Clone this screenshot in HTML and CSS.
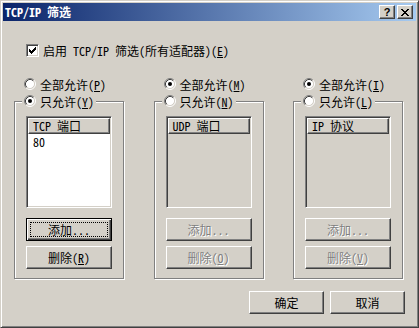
FILE: index.html
```
<!DOCTYPE html>
<html lang="zh-CN">
<head>
    <meta charset="UTF-8">
    <title>TCP/IP 筛选</title>
    <link rel="stylesheet" href="styles.css">
</head>
<body>

<div class="window">
    <div class="titlebar">
        <span class="title">TCP/IP 筛选</span>
        <div class="caption-buttons">
            <span class="cap-btn help">?</span>
            <span class="cap-btn">
                <svg width="8" height="7" viewBox="0 0 8 7" shape-rendering="crispEdges"><path d="M0 0h2v1H0z M6 0h2v1H6z M1 1h2v1H1z M5 1h2v1H5z M2 2h4v1H2z M3 3h2v1H3z M2 4h4v1H2z M1 5h2v1H1z M5 5h2v1H5z M0 6h2v1H0z M6 6h2v1H6z" fill="#000"/></svg>
            </span>
        </div>
    </div>

    <div class="client">
        <div class="check-row">
            <span class="checkbox">
                <svg width="11" height="11" viewBox="0 0 11 11" shape-rendering="crispEdges"><path d="M2 4h1v3H2z M3 5h1v3H3z M4 6h1v3H4z M5 5h1v3H5z M6 4h1v3H6z M7 3h1v3H7z M8 2h1v3H8z" fill="#000"/></svg>
            </span>
            启用 TCP/IP 筛选(所有适配器)(<u>E</u>)
        </div>

        <div class="columns">
            <!-- TCP -->
            <div class="column">
                <div class="radio-row">
                    <svg class="radio" width="12" height="12" viewBox="0 0 12 12"><circle cx="6" cy="6" r="4.5" fill="#fff"/><path d="M2.11 9.89A5.5 5.5 0 0 1 9.89 2.11" stroke="#808080" fill="none"/><path d="M9.89 2.11A5.5 5.5 0 0 1 2.11 9.89" stroke="#fff" fill="none"/><path d="M2.82 9.18A4.5 4.5 0 0 1 9.18 2.82" stroke="#404040" fill="none"/><path d="M9.18 2.82A4.5 4.5 0 0 1 2.82 9.18" stroke="#d4d0c8" fill="none"/></svg>
                    全部允许(<u>P</u>)
                </div>
                <fieldset class="group">
                    <legend class="radio-row legend">
                        <svg class="radio" width="12" height="12" viewBox="0 0 12 12"><circle cx="6" cy="6" r="4.5" fill="#fff"/><path d="M2.11 9.89A5.5 5.5 0 0 1 9.89 2.11" stroke="#808080" fill="none"/><path d="M9.89 2.11A5.5 5.5 0 0 1 2.11 9.89" stroke="#fff" fill="none"/><path d="M2.82 9.18A4.5 4.5 0 0 1 9.18 2.82" stroke="#404040" fill="none"/><path d="M9.18 2.82A4.5 4.5 0 0 1 2.82 9.18" stroke="#d4d0c8" fill="none"/><circle cx="6" cy="6" r="2" fill="#000"/></svg>
                        只允许(<u>Y</u>)
                    </legend>
                    <div class="group-body">
                        <div class="listbox">
                            <div class="list-header">TCP 端口</div>
                            <div class="list-item">80</div>
                        </div>
                        <button class="btn default">添加...</button>
                        <button class="btn">删除(<u>R</u>)</button>
                    </div>
                </fieldset>
            </div>

            <!-- UDP -->
            <div class="column">
                <div class="radio-row">
                    <svg class="radio" width="12" height="12" viewBox="0 0 12 12"><circle cx="6" cy="6" r="4.5" fill="#fff"/><path d="M2.11 9.89A5.5 5.5 0 0 1 9.89 2.11" stroke="#808080" fill="none"/><path d="M9.89 2.11A5.5 5.5 0 0 1 2.11 9.89" stroke="#fff" fill="none"/><path d="M2.82 9.18A4.5 4.5 0 0 1 9.18 2.82" stroke="#404040" fill="none"/><path d="M9.18 2.82A4.5 4.5 0 0 1 2.82 9.18" stroke="#d4d0c8" fill="none"/><circle cx="6" cy="6" r="2" fill="#000"/></svg>
                    全部允许(<u>M</u>)
                </div>
                <fieldset class="group">
                    <legend class="radio-row legend">
                        <svg class="radio" width="12" height="12" viewBox="0 0 12 12"><circle cx="6" cy="6" r="4.5" fill="#fff"/><path d="M2.11 9.89A5.5 5.5 0 0 1 9.89 2.11" stroke="#808080" fill="none"/><path d="M9.89 2.11A5.5 5.5 0 0 1 2.11 9.89" stroke="#fff" fill="none"/><path d="M2.82 9.18A4.5 4.5 0 0 1 9.18 2.82" stroke="#404040" fill="none"/><path d="M9.18 2.82A4.5 4.5 0 0 1 2.82 9.18" stroke="#d4d0c8" fill="none"/></svg>
                        只允许(<u>N</u>)
                    </legend>
                    <div class="group-body">
                        <div class="listbox disabled">
                            <div class="list-header">UDP 端口</div>
                        </div>
                        <button class="btn" disabled>添加...</button>
                        <button class="btn" disabled>删除(<u>O</u>)</button>
                    </div>
                </fieldset>
            </div>

            <!-- IP -->
            <div class="column">
                <div class="radio-row">
                    <svg class="radio" width="12" height="12" viewBox="0 0 12 12"><circle cx="6" cy="6" r="4.5" fill="#fff"/><path d="M2.11 9.89A5.5 5.5 0 0 1 9.89 2.11" stroke="#808080" fill="none"/><path d="M9.89 2.11A5.5 5.5 0 0 1 2.11 9.89" stroke="#fff" fill="none"/><path d="M2.82 9.18A4.5 4.5 0 0 1 9.18 2.82" stroke="#404040" fill="none"/><path d="M9.18 2.82A4.5 4.5 0 0 1 2.82 9.18" stroke="#d4d0c8" fill="none"/><circle cx="6" cy="6" r="2" fill="#000"/></svg>
                    全部允许(<u>I</u>)
                </div>
                <fieldset class="group">
                    <legend class="radio-row legend">
                        <svg class="radio" width="12" height="12" viewBox="0 0 12 12"><circle cx="6" cy="6" r="4.5" fill="#fff"/><path d="M2.11 9.89A5.5 5.5 0 0 1 9.89 2.11" stroke="#808080" fill="none"/><path d="M9.89 2.11A5.5 5.5 0 0 1 2.11 9.89" stroke="#fff" fill="none"/><path d="M2.82 9.18A4.5 4.5 0 0 1 9.18 2.82" stroke="#404040" fill="none"/><path d="M9.18 2.82A4.5 4.5 0 0 1 2.82 9.18" stroke="#d4d0c8" fill="none"/></svg>
                        只允许(<u>L</u>)
                    </legend>
                    <div class="group-body">
                        <div class="listbox disabled">
                            <div class="list-header">IP 协议</div>
                        </div>
                        <button class="btn" disabled>添加...</button>
                        <button class="btn" disabled>删除(<u>V</u>)</button>
                    </div>
                </fieldset>
            </div>
        </div>

        <div class="dialog-buttons">
            <button class="btn wide">确定</button>
            <button class="btn wide">取消</button>
        </div>
    </div>
</div>

</body>
</html>
```

FILE: styles.css
```
body {
    margin: 0;
    padding: 0;
    font-family: "Noto Sans Mono CJK SC", "Noto Sans CJK SC", sans-serif;
    font-size: 12px;
    color: #000;
    background-color: #d4d0c8;
}

.window {
    width: 419px;
    height: 328px;
    box-sizing: border-box;
    padding: 2px;
    background-color: #d4d0c8;
    border: 1px solid;
    border-color: #d4d0c8 #404040 #404040 #d4d0c8;
    box-shadow: inset 1px 1px 0 #fff, inset -1px -1px 0 #808080;
}

/* title bar */
.titlebar {
    height: 18px;
    display: flex;
    align-items: center;
    justify-content: space-between;
    padding: 0 3px 0 2px;
    background: linear-gradient(to right, #0a246a, #a6caf0);
}

.title {
    color: #fff;
    font-weight: bold;
    line-height: 14px;
}

.caption-buttons {
    display: flex;
    gap: 2px;
}

.cap-btn {
    width: 16px;
    height: 14px;
    box-sizing: border-box;
    display: flex;
    align-items: center;
    justify-content: center;
    background-color: #d4d0c8;
    border: 1px solid;
    border-color: #fff #404040 #404040 #fff;
    box-shadow: inset -1px -1px 0 #808080;
}

.cap-btn.help {
    font-family: "Liberation Sans", sans-serif;
    font-weight: bold;
    font-size: 11px;
    line-height: 10px;
}

/* client */
.client {
    padding: 0 11px;
}

.check-row {
    display: flex;
    align-items: center;
    height: 16px;
    margin-top: 21px;
    padding-left: 12px;
}

.checkbox {
    width: 13px;
    height: 13px;
    box-sizing: border-box;
    margin-right: 4px;
    background-color: #fff;
    border: 1px solid;
    border-color: #808080 #fff #fff #808080;
    box-shadow: inset 1px 1px 0 #404040, inset -1px -1px 0 #d4d0c8;
}

.checkbox svg {
    display: block;
}

.columns {
    display: grid;
    grid-template-columns: 110px 110px 110px;
    column-gap: 29.5px;
    margin-top: 18px;
}

.radio-row {
    display: flex;
    align-items: center;
    height: 16px;
    padding-left: 10px;
}

.radio {
    display: block;
    margin-right: 4px;
    flex: none;
}

.group {
    margin: 1px 0 0 0;
    padding: 0;
    min-width: 0;
    border: 1px solid #808080;
    box-shadow: inset 1px 1px 0 #fff, 1px 1px 0 #fff;
}

.legend {
    margin-left: 7px;
    padding: 0 2px;
    background-color: #d4d0c8;
}

.group-body {
    padding: 7px 11px 9px;
}

.listbox {
    height: 92px;
    box-sizing: border-box;
    padding: 1px;
    margin-bottom: 10px;
    background-color: #fff;
    border: 1px solid;
    border-color: #808080 #fff #fff #808080;
    box-shadow: inset 1px 1px 0 #404040, inset -1px -1px 0 #d4d0c8;
}

.listbox.disabled {
    background-color: #d4d0c8;
}

.list-header {
    height: 16px;
    box-sizing: border-box;
    padding-left: 4px;
    line-height: 13px;
    background-color: #d4d0c8;
    border: 1px solid;
    border-color: #fff #404040 #404040 #fff;
    box-shadow: inset -1px -1px 0 #808080;
}

.list-item {
    padding: 2px 0 0 5px;
    line-height: 12px;
}

.btn {
    display: block;
    width: 100%;
    height: 23px;
    padding: 0;
    margin: 0;
    font: inherit;
    color: #000;
    background-color: #d4d0c8;
    border: 1px solid;
    border-color: #fff #404040 #404040 #fff;
    box-shadow: inset -1px -1px 0 #808080;
}

.btn + .btn {
    margin-top: 5px;
}

.btn.default {
    border-color: #000;
    box-shadow: inset 1px 1px 0 #fff, inset -1px -1px 0 #404040, inset -2px -2px 0 #808080;
    outline: 1px dotted #000;
    outline-offset: -5px;
}

.btn:disabled {
    color: #808080;
    text-shadow: 1px 1px 0 #fff;
}

.dialog-buttons {
    display: flex;
    justify-content: flex-end;
    gap: 6px;
    margin-top: 12px;
}

.dialog-buttons .btn {
    width: 75px;
    margin: 0;
}
```
